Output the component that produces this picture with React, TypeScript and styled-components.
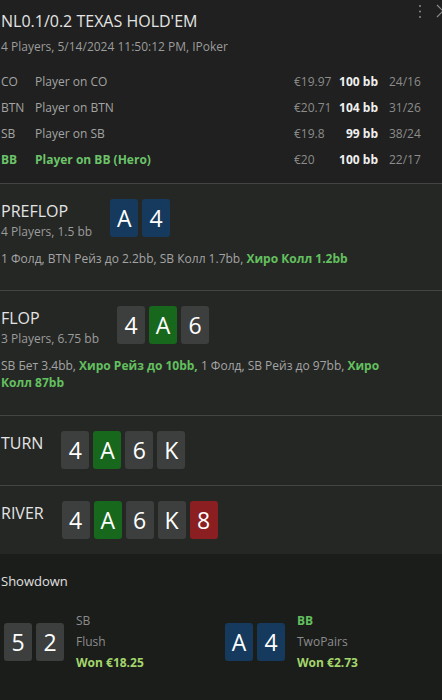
import React from "react";
import styled, { createGlobalStyle } from "styled-components";

const GlobalStyle = createGlobalStyle`
  html, body { margin: 0; padding: 0; background: #1b1d1b; }
  body { font-family: "Segoe UI", "Open Sans", "Noto Sans", sans-serif; color: #a8a8a8; }
`;

const Panel = styled.div`
  width: 442px;
  min-height: 700px;
  background: #1b1d1b;
  overflow: hidden;
`;

const Header = styled.header`
  background: #1f201f;
  padding: 3px 0 11px 1px;
`;

const TopRow = styled.div`
  display: flex;
  align-items: flex-start;
  justify-content: space-between;
`;

const Title = styled.h1`
  margin: 7px 0 0;
  font-size: 16px;
  line-height: 22px;
  font-weight: 400;
  color: #e4e4e4;
`;

const Tools = styled.div`
  display: flex;
  align-items: flex-start;
  gap: 13px;
  margin-right: -3px;
`;

const Subtitle = styled.div`
  margin-top: 6px;
  font-size: 12px;
  line-height: 18px;
  color: #9c9c9c;
`;

const Players = styled.div`
  margin-top: 12px;
  padding-right: 21px;
`;

const PlayerRow = styled.div<{ $hero?: boolean }>`
  display: grid;
  grid-template-columns: 34px 1fr 47px 40px 43px;
  align-items: center;
  height: 26px;
  font-size: 12px;
  color: ${(p) => (p.$hero ? "#6cc36a" : "#a4a4a4")};
  font-weight: ${(p) => (p.$hero ? 700 : 400)};
`;

const Money = styled.span`
  color: #8c8c8c;
  font-weight: 400;
  padding-left: 3px;
`;

const Stack = styled.span`
  color: #f0f0f0;
  font-weight: 700;
  text-align: right;
`;

const Ratio = styled.span`
  color: #8c8c8c;
  font-weight: 400;
  padding-left: 11px;
`;

const Street = styled.section<{ $bottom: number }>`
  background: #252725;
  border-top: 1px solid #434543;
  padding: 15px 0 ${(p) => p.$bottom}px 1px;
`;

const StreetHead = styled.div`
  display: flex;
  align-items: flex-start;
  gap: 18px;
`;

const StreetTitle = styled.div`
  display: flex;
  flex-direction: column;
`;

const StreetName = styled.div`
  margin-top: 2px;
  font-size: 16px;
  line-height: 20px;
  color: #e4e4e4;
`;

const StreetInfo = styled.div`
  margin-top: 2px;
  font-size: 12px;
  line-height: 18px;
  color: #9c9c9c;
`;

const Cards = styled.div`
  display: flex;
  gap: 4px;
`;

const cardColors: Record<string, string> = {
  s: "#3d3f3f",
  h: "#8a1e21",
  d: "#163a5d",
  c: "#17671c",
};

const Card = styled.div<{ $suit: string }>`
  width: 28px;
  height: 38px;
  border-radius: 3px;
  background: ${(p) => cardColors[p.$suit]};
  color: #ffffff;
  font-size: 23px;
  line-height: 38px;
  text-align: center;
`;

const Actions = styled.p`
  margin: 9px 0 0;
  font-size: 12px;
  line-height: 17px;
  color: #a4a4a4;
  padding-right: 60px;
`;

const Hero = styled.span`
  color: #63c05f;
  font-weight: 700;
`;

const Showdown = styled.section`
  background: #1b1d1b;
  padding: 18px 0 30px 1px;
`;

const ShowdownTitle = styled.div`
  font-size: 13px;
  line-height: 18px;
  color: #e0e0e0;
`;

const ShowdownGrid = styled.div`
  display: grid;
  grid-template-columns: 221px 221px;
  margin: 20px 0 0 3px;
`;

const ShowPlayer = styled.div`
  display: flex;
  align-items: center;
  gap: 12px;
`;

const ShowInfo = styled.div`
  display: flex;
  flex-direction: column;
  font-size: 12px;
  line-height: 21px;
`;

const ShowPos = styled.span<{ $hero?: boolean }>`
  color: ${(p) => (p.$hero ? "#63c05f" : "#8c8c8c")};
  font-weight: ${(p) => (p.$hero ? 700 : 400)};
`;

const ShowHand = styled.span`
  color: #8c8c8c;
`;

const Won = styled.span`
  color: #a3d66c;
  font-weight: 700;
`;

const DotsIcon = () => (
  <svg width="4" height="16" viewBox="0 0 4 16">
    <circle cx="2" cy="3" r="1" fill="#8a8a8a" />
    <circle cx="2" cy="8.5" r="1" fill="#8a8a8a" />
    <circle cx="2" cy="14" r="1" fill="#8a8a8a" />
  </svg>
);

const ChevronIcon = () => (
  <svg width="10" height="16" viewBox="0 0 10 16">
    <path d="M2 2 L8 8 L2 14" fill="none" stroke="#8a8a8a" strokeWidth="1.2" />
  </svg>
);

type C = [string, string];

const CardList = ({ cards }: { cards: C[] }) => (
  <Cards>
    {cards.map(([r, s], i) => (
      <Card key={i} $suit={s}>
        {r}
      </Card>
    ))}
  </Cards>
);

const players = [
  { pos: "CO", name: "Player on CO", money: "€19.97", stack: "100 bb", ratio: "24/16" },
  { pos: "BTN", name: "Player on BTN", money: "€20.71", stack: "104 bb", ratio: "31/26" },
  { pos: "SB", name: "Player on SB", money: "€19.8", stack: "99 bb", ratio: "38/24" },
  { pos: "BB", name: "Player on BB (Hero)", money: "€20", stack: "100 bb", ratio: "22/17", hero: true },
];

export default function App() {
  return (
    <>
      <GlobalStyle />
      <Panel>
        <Header>
          <TopRow>
            <Title>NL0.1/0.2 TEXAS HOLD'EM</Title>
            <Tools>
              <DotsIcon />
              <ChevronIcon />
            </Tools>
          </TopRow>
          <Subtitle>4 Players, 5/14/2024 11:50:12 PM, IPoker</Subtitle>
          <Players>
            {players.map((p) => (
              <PlayerRow key={p.pos} $hero={p.hero}>
                <span>{p.pos}</span>
                <span>{p.name}</span>
                <Money>{p.money}</Money>
                <Stack>{p.stack}</Stack>
                <Ratio>{p.ratio}</Ratio>
              </PlayerRow>
            ))}
          </Players>
        </Header>

        <Street $bottom={23}>
          <StreetHead>
            <StreetTitle>
              <StreetName>PREFLOP</StreetName>
              <StreetInfo>4 Players, 1.5 bb</StreetInfo>
            </StreetTitle>
            <CardList cards={[["A", "d"], ["4", "d"]]} />
          </StreetHead>
          <Actions>
            1 Фолд, BTN Рейз до 2.2bb, SB Колл 1.7bb, <Hero>Хиро Колл 1.2bb</Hero>
          </Actions>
        </Street>

        <Street $bottom={24}>
          <StreetHead>
            <StreetTitle>
              <StreetName>FLOP</StreetName>
              <StreetInfo>3 Players, 6.75 bb</StreetInfo>
            </StreetTitle>
            <CardList cards={[["4", "s"], ["A", "c"], ["6", "s"]]} />
          </StreetHead>
          <Actions>
            SB Бет 3.4bb, <Hero>Хиро Рейз до 10bb,</Hero> 1 Фолд, SB Рейз до 97bb, <Hero>Хиро Колл 87bb</Hero>
          </Actions>
        </Street>

        <Street $bottom={16}>
          <StreetHead>
            <StreetTitle>
              <StreetName>TURN</StreetName>
            </StreetTitle>
            <CardList cards={[["4", "s"], ["A", "c"], ["6", "s"], ["K", "s"]]} />
          </StreetHead>
        </Street>

        <Street $bottom={15}>
          <StreetHead>
            <StreetTitle>
              <StreetName>RIVER</StreetName>
            </StreetTitle>
            <CardList cards={[["4", "s"], ["A", "c"], ["6", "s"], ["K", "s"], ["8", "h"]]} />
          </StreetHead>
        </Street>

        <Showdown>
          <ShowdownTitle>Showdown</ShowdownTitle>
          <ShowdownGrid>
            <ShowPlayer>
              <CardList cards={[["5", "s"], ["2", "s"]]} />
              <ShowInfo>
                <ShowPos>SB</ShowPos>
                <ShowHand>Flush</ShowHand>
                <Won>Won €18.25</Won>
              </ShowInfo>
            </ShowPlayer>
            <ShowPlayer>
              <CardList cards={[["A", "d"], ["4", "d"]]} />
              <ShowInfo>
                <ShowPos $hero>BB</ShowPos>
                <ShowHand>TwoPairs</ShowHand>
                <Won>Won €2.73</Won>
              </ShowInfo>
            </ShowPlayer>
          </ShowdownGrid>
        </Showdown>
      </Panel>
    </>
  );
}
